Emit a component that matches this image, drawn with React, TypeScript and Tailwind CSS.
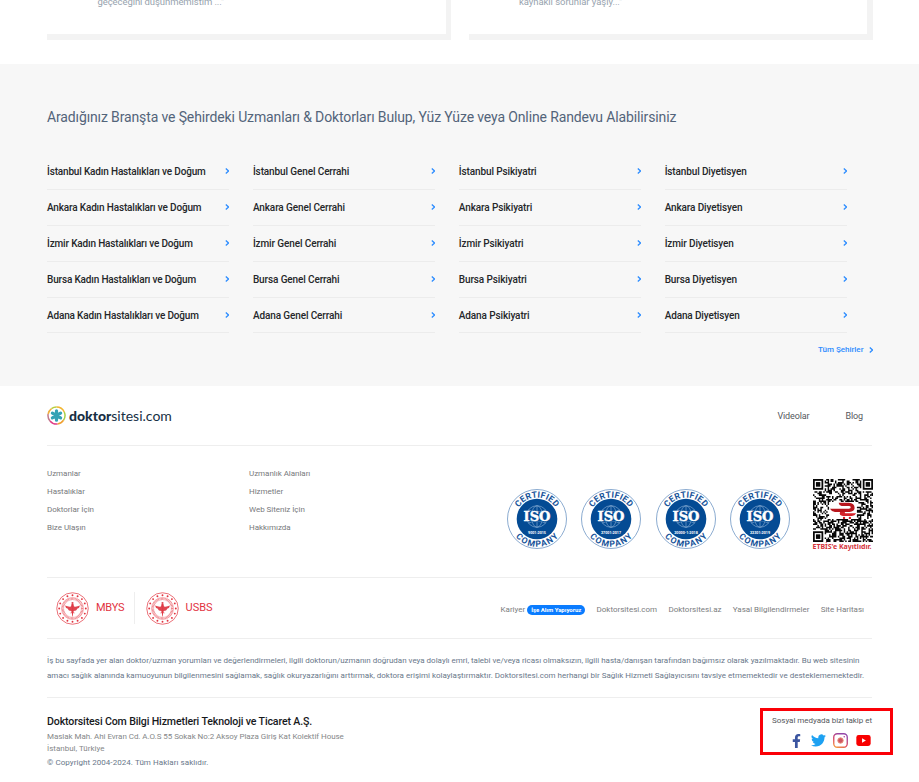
import React from "react";

const cities = ["İstanbul", "Ankara", "İzmir", "Bursa", "Adana"];

const branches = [
  { name: "Kadın Hastalıkları ve Doğum", tracking: "tracking-[-0.17px]" },
  { name: "Genel Cerrahi", tracking: "tracking-[-0.12px]" },
  { name: "Psikiyatri", tracking: "tracking-[-0.12px]" },
  { name: "Diyetisyen", tracking: "tracking-[-0.14px]" },
];

const footerLinks = [
  ["Uzmanlar", "Hastalıklar", "Doktorlar İçin", "Bize Ulaşın"],
  ["Uzmanlık Alanları", "Hizmetler", "Web Siteniz İçin", "Hakkımızda"],
];

const certificates = ["9001:2015", "27001:2017", "20000-1:2018", "22301:2019"];

function Chevron() {
  return (
    <svg viewBox="0 0 4.5 6" className="h-[6px] w-[4.5px] shrink-0" fill="none" stroke="#2c8cff" strokeWidth="1.3">
      <path d="M0.8 0.6 L3.5 3 L0.8 5.4" />
    </svg>
  );
}

function LogoMark() {
  return (
    <svg viewBox="0 0 38 38" className="size-[19px]" fill="none">
      <g strokeWidth="3">
        <path d="M19 2 A17 17 0 0 1 34.5 12" stroke="#f2b632" />
        <path d="M34.5 12 A17 17 0 0 1 33 28.5" stroke="#a9cf46" />
        <path d="M33 28.5 A17 17 0 0 1 21 36" stroke="#f0a030" />
        <path d="M21 36 A17 17 0 0 1 6 30" stroke="#e0408a" />
        <path d="M6 30 A17 17 0 0 1 2.3 16" stroke="#c07a8c" />
        <path d="M2.3 16 A17 17 0 0 1 9 5.2" stroke="#f0b040" />
        <path d="M9 5.2 A17 17 0 0 1 19 2" stroke="#b6cf3c" />
      </g>
      <g stroke="#35a3b5" strokeWidth="6.4" strokeLinecap="round">
        <path d="M19 9.5 V28.5 M10.8 14.2 L27.2 23.8 M27.2 14.2 L10.8 23.8" />
      </g>
    </svg>
  );
}

function IsoBadge({ code, index }: { code: string; index: number }) {
  const top = `iso-top-${index}`;
  const bottom = `iso-bottom-${index}`;
  return (
    <svg viewBox="0 0 60 60" className="size-[60px]">
      <defs>
        <path id={top} d="M8.5 30 A21.5 21.5 0 0 1 51.5 30" />
        <path id={bottom} d="M2.2 30 A27.8 27.8 0 0 0 57.8 30" />
      </defs>
      <circle cx="30" cy="30" r="29.5" fill="white" stroke="#6d95c4" strokeWidth="0.8" />
      <circle cx="30" cy="30" r="20.3" fill="#044b94" />
      <g fill="none" stroke="#8fb2d6" strokeWidth="0.6">
        <circle cx="30" cy="27.5" r="10.8" />
        <ellipse cx="30" cy="27.5" rx="5.5" ry="10.8" />
        <path d="M30 16.7 V38.3 M21.5 21 Q30 25 38.5 21 M21.5 34 Q30 30 38.5 34" />
      </g>
      <rect x="16.5" y="22.8" width="27" height="9.6" fill="#044b94" />
      <text x="30" y="32" textAnchor="middle" textLength="27" lengthAdjust="spacingAndGlyphs" fontFamily="DejaVu Serif, serif" fontWeight="700" fontSize="12.4" fill="white" stroke="white" strokeWidth="0.4">ISO</text>
      <text x="30" y="45" textAnchor="middle" fontFamily="Roboto, sans-serif" fontWeight="700" fontSize="3.7" fill="white">{code}</text>
      <g fontFamily="Roboto, sans-serif" fontWeight="700" fill="#17539a">
        <text fontSize="8.6" transform="translate(30 0) scale(1 1) translate(-30 0)">
          <textPath href={`#${top}`} startOffset="50%" textAnchor="middle" textLength="43" lengthAdjust="spacing">CERTIFIED</textPath>
        </text>
        <text fontSize="8.6">
          <textPath href={`#${bottom}`} startOffset="50%" textAnchor="middle" textLength="49" lengthAdjust="spacing">COMPANY</textPath>
        </text>
      </g>
    </svg>
  );
}

const QR_SIZE = 41;

function qrPath() {
  let seed = 7919;
  let d = "";
  const last = QR_SIZE - 8;
  for (let y = 0; y < QR_SIZE; y++) {
    for (let x = 0; x < QR_SIZE; x++) {
      seed = (seed * 48271) % 2147483647;
      const finder = (x < 8 && y < 8) || (x >= last && y < 8) || (x < 8 && y >= last);
      const center = x > 10 && x < 30 && y > 14 && y < 26;
      if (!finder && !center && (seed >> 8) % 100 < 54) d += `M${x} ${y}h1v1h-1z`;
    }
  }
  return d;
}

function QrCode() {
  const finders = [[0, 0], [QR_SIZE - 7, 0], [0, QR_SIZE - 7]];
  return (
    <svg viewBox="0 0 41 41" preserveAspectRatio="none" className="h-[63px] w-[60px]">
      <path d={qrPath()} fill="#080808" />
      {finders.map(([x, y]) => (
        <g key={`${x}-${y}`}>
          <rect x={x + 0.6} y={y + 0.6} width="5.8" height="5.8" fill="white" stroke="#080808" strokeWidth="1.2" />
          <rect x={x + 2} y={y + 2} width="3" height="3" fill="#080808" />
        </g>
      ))}
      <path d="M17.5 15.4 H24.5 Q28.6 15.6 28.4 19 Q28.2 21.2 25 21.4 H15 Q12.5 21.2 11.6 19.4 H24.5 Q25.8 19.3 25.8 18.4 Q25.7 17.5 24.5 17.5 H19.5 Q17.8 17.2 17.5 15.4 Z" fill="#b8161d" />
      <path d="M18.5 21.4 H22 Q21 22.3 23 22.3 H29.5 Q28.6 24 26.5 24 H20.5 Q17.5 23.6 18.5 21.4 Z" fill="#d4222a" />
      <circle cx="21.2" cy="25.3" r="0.8" fill="#cf1821" />
      <circle cx="25.2" cy="25.3" r="0.8" fill="#cf1821" />
    </svg>
  );
}

function MinistrySeal() {
  const stars = Array.from({ length: 16 }, (_, i) => (i * Math.PI) / 8);
  return (
    <svg viewBox="0 0 66 66" className="size-[33px]" fill="none" stroke="#e2333f">
      <circle cx="33" cy="33" r="31.5" strokeWidth="1.4" />
      <circle cx="33" cy="33" r="19" strokeWidth="4.4" strokeDasharray="1.6 1" opacity="0.6" />
      <circle cx="33" cy="33" r="22" strokeWidth="0.8" />
      {stars.map((a) => (
        <circle key={a} cx={33 + 26.6 * Math.cos(a)} cy={33 + 26.6 * Math.sin(a)} r="1.9" fill="#e2333f" stroke="none" />
      ))}
      <path d="M33 48 L30.5 38 Q25 38 23 33 Q19 32 18 27 Q25 30 30 29 L31 24 H35 L36 29 Q41 30 48 27 Q47 32 43 33 Q41 38 35.5 38 Z" fill="#df4650" stroke="none" />
      <circle cx="33" cy="22" r="2.2" fill="#df4650" stroke="none" />
      <path d="M33 24 V49 M29 42 Q33 39 37 42" strokeWidth="1.2" />
    </svg>
  );
}

function FacebookIcon() {
  return (
    <svg viewBox="0 0 320 512" className="mr-[2px] h-[14px] w-[9px]" fill="#3b55a0">
      <path d="M279 288l14-93h-89v-60c0-25 12-50 52-50h41V7s-37-7-72-7c-73 0-121 44-121 125v70H23v93h81v224h100V288z" />
    </svg>
  );
}

function TwitterIcon() {
  return (
    <svg viewBox="0 0 24 24" className="size-[15px]" fill="#1da1f2">
      <path d="M23.95 4.57a10 10 0 0 1-2.82.77 4.96 4.96 0 0 0 2.16-2.72c-.95.56-2 .96-3.13 1.18a4.92 4.92 0 0 0-8.38 4.48C7.69 8.1 4.07 6.13 1.64 3.16a4.92 4.92 0 0 0 1.52 6.57 4.9 4.9 0 0 1-2.23-.61v.06a4.92 4.92 0 0 0 3.95 4.83 5 5 0 0 1-2.21.08 4.94 4.94 0 0 0 4.6 3.42A9.87 9.87 0 0 1 0 19.54a13.99 13.99 0 0 0 7.56 2.21c9.05 0 14-7.5 14-13.98 0-.21 0-.42-.02-.63a9.94 9.94 0 0 0 2.41-2.57z" />
    </svg>
  );
}

function InstagramIcon() {
  return (
    <svg viewBox="0 0 30 30" className="size-[15px]" fill="none">
      <defs>
        <linearGradient id="insta" x1="0" y1="1" x2="0.5" y2="0">
          <stop offset="0" stopColor="#f6a43c" />
          <stop offset="0.5" stopColor="#dc4463" />
          <stop offset="1" stopColor="#9347a8" />
        </linearGradient>
      </defs>
      <rect x="1.5" y="1.5" width="27" height="27" rx="7" stroke="url(#insta)" strokeWidth="2.7" />
      <circle cx="15" cy="15" r="5.4" fill="#cf5562" stroke="#e8917c" strokeWidth="2" />
      <circle cx="22.5" cy="7.5" r="1.6" fill="#b9489a" />
    </svg>
  );
}

function YoutubeIcon() {
  return (
    <svg viewBox="0 0 30 23" className="h-[11px] w-[15px]">
      <rect width="30" height="23" rx="5" fill="#f80000" />
      <path d="M12 6.7 L20 11.5 L12 16.3 Z" fill="white" />
    </svg>
  );
}

function Reviews() {
  return (
    <section className="flex h-16 justify-between pr-[46px] pl-[47px] text-[9.5px] leading-3 text-[#97a3ae]">
      <div className="h-10 w-[403.5px] border-r-[5px] border-b-[6px] border-[#f3f3f3] pl-[50.5px]">
        <p className="-mt-[4px] tracking-[-0.08px]">geçeceğini düşünmemistim ..."</p>
      </div>
      <div className="h-10 w-[404px] border-r-[6px] border-b-[6px] border-[#f3f3f3] pl-[50px]">
        <p className="-mt-[4px] tracking-[-0.05px]">kaynaklı sorunlar yaşıy..."</p>
      </div>
    </section>
  );
}

function BranchSection() {
  return (
    <section className="h-[322px] bg-[#f7f7f7] pt-[43px] pr-[46px] pl-[47px]">
      <h2 className="text-[14px] leading-[21px] tracking-[-0.13px] whitespace-nowrap text-[#53647a]">
        Aradığınız Branşta ve Şehirdeki Uzmanları &amp; Doktorları Bulup, Yüz Yüze veya Online Randevu Alabilirsiniz
      </h2>
      <div className="mt-[26px] flex gap-[23.5px]">
        {branches.map((branch) => (
          <div key={branch.name} className="w-[182.4px]">
            {cities.map((city) => (
              <a
                key={city}
                className="flex h-[35.9px] items-center justify-between border-b border-[#ececec] text-[10px] font-medium whitespace-nowrap text-[#25272a]"
              >
                <span className={branch.tracking}>{city} {branch.name}</span>
                <Chevron />
              </a>
            ))}
          </div>
        ))}
      </div>
      <a className="mt-[11px] flex items-center justify-end gap-[5px] text-[8px] leading-3 font-medium text-[#2c8cff]">
        <span>Tüm Şehirler</span>
        <Chevron />
      </a>
    </section>
  );
}

function Footer() {
  return (
    <footer className="pr-[47px] pl-[47px]">
      <div className="flex h-[60px] items-center justify-between border-b border-[#eeeeee] text-[#172f44]">
        <div className="flex items-center gap-[3px]">
          <LogoMark />
          <span className="font-['Lato',sans-serif] text-[14px] leading-4">
            <b className="font-black">doktor</b>sitesi.com
          </span>
        </div>
        <nav className="flex gap-9 pt-[2px] pr-[9px] text-[9px] tracking-[-0.12px] text-[#55585c]">
          <a>Videolar</a>
          <a>Blog</a>
        </nav>
      </div>

      <div className="flex h-[132px] justify-between border-b border-[#eeeeee]">
        <div className="flex pt-[19px] text-[8px] leading-[18px] tracking-[-0.03px] text-[#77797c]">
          {footerLinks.map((column) => (
            <ul key={column[0]} className="w-[202px]">
              {column.map((link) => (
                <li key={link}>{link}</li>
              ))}
            </ul>
          ))}
        </div>
        <div className="-mr-[0.5px] flex">
          <div className="flex gap-[14.2px] pt-[43px]">
            {certificates.map((code, i) => (
              <IsoBadge key={code} code={code} index={i} />
            ))}
          </div>
          <div className="ml-[22.7px] w-[60px] pt-[33px]">
            <QrCode />
            <p className="font-['Noto_Sans',sans-serif] text-[7px] leading-[9px] font-bold tracking-[-0.02px] whitespace-nowrap text-[#d5333b]">ETBİS'e Kayıtlıdır.</p>
          </div>
        </div>
      </div>

      <div className="flex h-[61px] items-center justify-between border-b border-[#eeeeee]">
        <div className="flex items-center pl-[9px] text-[11px] text-[#e2333f]">
          <MinistrySeal />
          <span className="ml-[7px] w-[37.5px] pt-px tracking-[-0.25px]">MBYS</span>
          <span className="mr-[11px] h-8 w-px bg-[#eeeeee]" />
          <MinistrySeal />
          <span className="ml-[7px] pt-px">USBS</span>
        </div>
        <nav className="flex items-center gap-[11.3px] pt-[3px] pr-[8px] text-[8px] leading-[10px] whitespace-nowrap text-[#7b7d80]">
          <span className="flex items-center gap-[2px]">
            Kariyer
            <b className="flex h-[10px] w-[58px] items-center justify-center rounded-full bg-[#0a7cff] text-[6px] text-white">İşe Alım Yapıyoruz</b>
          </span>
          <a>Doktorsitesi.com</a>
          <a>Doktorsitesi.az</a>
          <a>Yasal Bilgilendirmeler</a>
          <a>Site Haritası</a>
        </nav>
      </div>

      <div className="h-[59px] border-b border-[#eeeeee] pt-[14px] text-[8px] leading-[15px] whitespace-nowrap text-[#69778a]">
        <p className="tracking-[-0.008px]">İş bu sayfada yer alan doktor/uzman yorumları ve değerlendirmeleri, ilgili doktorun/uzmanın doğrudan veya dolaylı emri, talebi ve/veya ricası olmaksızın, ilgili hasta/danışan tarafından bağımsız olarak yazılmaktadır. Bu web sitesinin</p>
        <p className="tracking-[0.008px]">amacı sağlık alanında kamuoyunun bilgilenmesini sağlamak, sağlık okuryazarlığını arttırmak, doktora erişimi kolaylaştırmaktır. Doktorsitesi.com herhangi bir Sağlık Hizmeti Sağlayıcısını tavsiye etmemektedir ve desteklememektedir.</p>
      </div>

      <div className="flex h-[84px] justify-between pt-[10px]">
        <div className="pt-[6px] text-[8px] leading-3 text-[#858789]">
          <h3 className="mb-px text-[10.6px] leading-4 font-medium tracking-[-0.14px] text-[#17191c]">Doktorsitesi Com Bilgi Hizmetleri Teknoloji ve Ticaret A.Ş.</h3>
          <p className="tracking-[-0.05px]">Maslak Mah. Ahi Evran Cd. A.O.S 55 Sokak No:2 Aksoy Plaza Giriş Kat Kolektif House</p>
          <p>İstanbul, Türkiye</p>
          <p className="mt-[2px] tracking-[0.06px] text-[#69778a]">© Copyright 2004-2024. Tüm Hakları saklıdır.</p>
        </div>
        <div className="-mr-[21px] h-[47px] w-[133px] border-[3px] border-[#fb0007] pt-[4px] pr-[18px]">
          <p className="text-right text-[8px] leading-3 tracking-[-0.03px] text-[#55585c]">Sosyal medyada bizi takip et</p>
          <div className="mt-[6px] flex items-center justify-end gap-[7.6px] pr-px">
            <FacebookIcon />
            <TwitterIcon />
            <InstagramIcon />
            <YoutubeIcon />
          </div>
        </div>
      </div>
    </footer>
  );
}

export default function App() {
  return (
    <main className="h-[782px] w-[919px] overflow-hidden bg-white font-['Roboto',sans-serif]">
      <Reviews />
      <BranchSection />
      <Footer />
    </main>
  );
}
